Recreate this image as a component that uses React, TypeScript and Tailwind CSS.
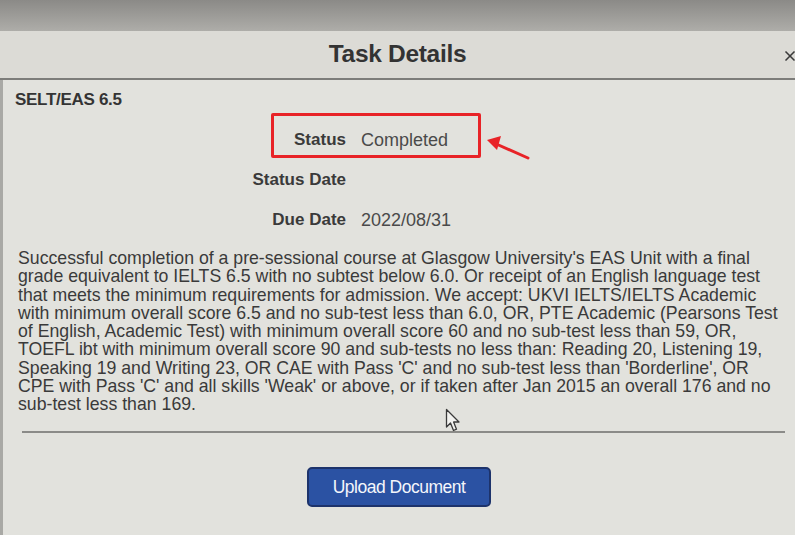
import { X } from 'lucide-react';

const LINES = [
  "Successful completion of a pre-sessional course at Glasgow University's EAS Unit with a final",
  'grade equivalent to IELTS 6.5 with no subtest below 6.0. Or receipt of an English language test',
  'that meets the minimum requirements for admission. We accept: UKVI IELTS/IELTS Academic',
  'with minimum overall score 6.5 and no sub-test less than 6.0, OR, PTE Academic (Pearsons Test',
  'of English, Academic Test) with minimum overall score 60 and no sub-test less than 59, OR,',
  'TOEFL ibt with minimum overall score 90 and sub-tests no less than: Reading 20, Listening 19,',
  "Speaking 19 and Writing 23, OR CAE with Pass 'C' and no sub-test less than 'Borderline', OR",
  "CPE with Pass 'C' and all skills 'Weak' or above, or if taken after Jan 2015 an overall 176 and no",
  'sub-test less than 169.',
];

const ROWS = [
  { label: 'Status', value: 'Completed' },
  { label: 'Status Date', value: '' },
  { label: 'Due Date', value: '2022/08/31' },
];

export default function App() {
  return (
    <div
      className="relative flex flex-col w-[795px] h-[535px] overflow-hidden bg-[#e2e2dd] text-[#343434]"
      style={{ fontFamily: '"Liberation Sans", Arial, sans-serif' }}
    >
      <div className="h-[31px] shrink-0 bg-gradient-to-b from-[#8b8a87] to-[#aeada9]" />

      <header className="relative h-[49px] shrink-0 bg-[#dcdbd6] border-b-2 border-[#7d7d7a] flex items-center justify-center">
        <h1 className="text-[24.5px] font-bold tracking-[-0.3px] text-[#333]">Task Details</h1>
        <X className="absolute right-[-3px] top-[17px] w-[16px] h-[16px] text-[#3a3a3a]" strokeWidth={2.5} />
      </header>

      <main className="flex-1 border-l-[3px] border-[#a9a9a5] pl-[12px] pr-[10px]">
        <div className="pt-[10px] leading-[20px] text-[17px] font-bold tracking-[-0.3px]">SELT/EAS 6.5</div>

        <div className="mt-[10px]">
          {ROWS.map((r) => (
            <div key={r.label} className="flex h-[40px] items-center">
              <div className="w-[331px] text-right text-[17px] font-bold text-[#3a3a3a]">{r.label}</div>
              <div className="ml-[15px] text-[18px] text-[#4a4a4a]">{r.value}</div>
            </div>
          ))}
        </div>

        <p className="mt-[9px] ml-[3px] text-[17.7px] leading-[18.25px] text-[#3a3a3a] whitespace-nowrap">
          {LINES.map((l, i) => (
            <span key={i} className="block">{l}</span>
          ))}
        </p>

        <div className="mt-[18px] ml-[7px] h-[2px] bg-[#8b8b88]" />

        <div className="mt-[34px] flex justify-center pr-[2px]">
          <button className="w-[184px] h-[40px] rounded-[5px] bg-[#2b52a3] border-2 border-[#1d336b] text-[#f4f6fb] text-[17.5px] tracking-[-0.5px]">
            Upload Document
          </button>
        </div>
      </main>

      {/* annotation */}
      <div className="absolute left-[271px] top-[113px] w-[210px] h-[45px] border-[3px] border-[#e82327] rounded-[2px]" />
      <svg className="absolute left-[484px] top-[132px]" width="50" height="32" viewBox="0 0 50 32">
        <line x1="44" y1="26" x2="10" y2="11" stroke="#e82327" strokeWidth="3" strokeLinecap="round" />
        <polygon points="3,8 17,4 13,18" fill="#e82327" />
      </svg>

      {/* mouse pointer */}
      <svg className="absolute left-[445px] top-[408px]" width="18" height="26" viewBox="0 0 18 26">
        <path d="M1.5 1.5 L1.5 19 L5.5 15 L8.5 22.5 L11.5 21.2 L8.6 14 L14 14 Z" fill="#f2f2ef" stroke="#3a3a3a" strokeWidth="1.3" strokeLinejoin="round" />
      </svg>
    </div>
  );
}
